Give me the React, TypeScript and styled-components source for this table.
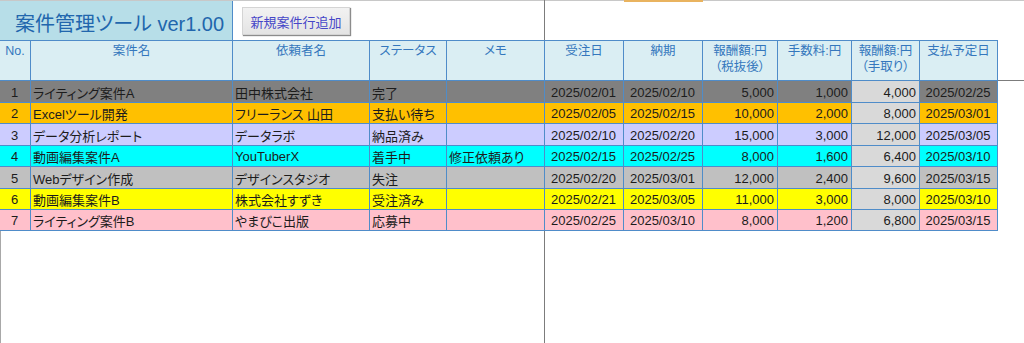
import styled, { createGlobalStyle } from "styled-components";

const GlobalStyle = createGlobalStyle`
  html, body {
    margin: 0;
    padding: 0;
    background: #ffffff;
    overflow: hidden;
  }
  body {
    font-family: "Liberation Sans", "Noto Sans CJK JP", sans-serif;
    font-feature-settings: "palt";
  }
`;

const COLS = "31px 202px 137px 77px 98px 79px 79px 75px 74px 68px 78px";
const BORDER = "#4f8cc9";

const Sheet = styled.div`
  position: relative;
  width: 1024px;
  height: 343px;
  display: flex;
  flex-direction: column;
`;

const TopStrip = styled.div`
  height: 1px;
  background: #c8c8c8;
  display: flex;
  flex-shrink: 0;
`;

const StripMark = styled.div`
  margin-left: 624px;
  width: 79px;
  height: 2px;
  background: #e9b35f;
`;

const TitleRow = styled.div`
  height: 39px;
  display: flex;
  flex-shrink: 0;
`;

const TitleCell = styled.div`
  width: 233px;
  box-sizing: border-box;
  border-right: 1px solid ${BORDER};
  background: #b7dee8;
  color: #2166ad;
  font-size: 20px;
  display: flex;
  align-items: center;
  padding-left: 15px;
  padding-top: 3px;
  white-space: nowrap;
  position: relative;
  z-index: 1;
`;

const ButtonArea = styled.div`
  padding: 6px 0 0 9px;
`;

const AddButton = styled.button`
  width: 108px;
  height: 28px;
  font-family: inherit;
  font-feature-settings: "palt";
  font-size: 13px;
  color: #4646c8;
  background: linear-gradient(#f2f2f2, #e4e4e4);
  border: 1px solid #d4d4d4;
  border-radius: 0;
  box-shadow: 1px 1px 1px #8c8c8c;
  padding: 0;
`;

const Grid = styled.div`
  position: relative;
  z-index: 1;
  display: grid;
  grid-template-columns: ${COLS};
  width: 998px;
  border-top: 1px solid ${BORDER};
  flex-shrink: 0;
`;

const HeadCell = styled.div`
  height: 40px;
  box-sizing: border-box;
  border-right: 1px solid ${BORDER};
  border-bottom: 1px solid ${BORDER};
  background: #daeef3;
  color: #3477bd;
  font-size: 12.5px;
  line-height: 16px;
  text-align: center;
  padding-top: 2px;
  white-space: pre-line;
`;

const Cell = styled.div<{ $bg: string; $h: number; $align: string }>`
  height: ${({ $h }) => $h}px;
  box-sizing: border-box;
  border-right: 1px solid ${BORDER};
  border-bottom: 1px solid ${BORDER};
  background: ${({ $bg }) => $bg};
  color: #1c1c1c;
  font-size: 13px;
  display: flex;
  align-items: center;
  justify-content: ${({ $align }) => $align};
  padding: 1px 3px 0 2px;
  white-space: nowrap;
  overflow: hidden;
`;

const Filler = styled.div`
  flex: 1;
  border-left: 1px solid #a8a8a8;
`;

const FreezeV = styled.div`
  position: absolute;
  left: 544px;
  top: 0;
  width: 1px;
  height: 343px;
  background: #7c7c7c;
`;

const FreezeH = styled.div`
  position: absolute;
  left: 0;
  top: 80px;
  width: 1024px;
  height: 1px;
  background: #7c7c7c;
`;

const headers = [
  "No.",
  "案件名",
  "依頼者名",
  "ステータス",
  "メモ",
  "受注日",
  "納期",
  "報酬額:円\n（税抜後）",
  "手数料:円",
  "報酬額:円\n（手取り）",
  "支払予定日",
];

const rows = [
  ["1", "ライティング案件A", "田中株式会社", "完了", "", "2025/02/01", "2025/02/10", "5,000", "1,000", "4,000", "2025/02/25", "#808080"],
  ["2", "Excelツール開発", "フリーランス 山田", "支払い待ち", "", "2025/02/05", "2025/02/15", "10,000", "2,000", "8,000", "2025/03/01", "#ffc000"],
  ["3", "データ分析レポート", "データラボ", "納品済み", "", "2025/02/10", "2025/02/20", "15,000", "3,000", "12,000", "2025/03/05", "#ccccff"],
  ["4", "動画編集案件A", "YouTuberX", "着手中", "修正依頼あり", "2025/02/15", "2025/02/25", "8,000", "1,600", "6,400", "2025/03/10", "#00ffff"],
  ["5", "Webデザイン作成", "デザインスタジオ", "失注", "", "2025/02/20", "2025/03/01", "12,000", "2,400", "9,600", "2025/03/15", "#c0c0c0"],
  ["6", "動画編集案件B", "株式会社すずき", "受注済み", "", "2025/02/21", "2025/03/05", "11,000", "3,000", "8,000", "2025/03/10", "#ffff00"],
  ["7", "ライティング案件B", "やまびこ出版", "応募中", "", "2025/02/25", "2025/03/10", "8,000", "1,200", "6,800", "2025/03/15", "#ffc0cb"],
];

const heights = [22, 21, 22, 21, 22, 21, 21];

const alignFor = (col: number) => {
  if (col === 0) return "center";
  if (col >= 1 && col <= 4) return "flex-start";
  if (col === 5 || col === 6 || col === 10) return "center";
  return "flex-end";
};

const App = () => {
  return (
    <Sheet>
      <GlobalStyle />
      <FreezeV />
      <FreezeH />
      <TopStrip>
        <StripMark />
      </TopStrip>
      <TitleRow>
        <TitleCell>案件管理ツール ver1.00</TitleCell>
        <ButtonArea>
          <AddButton>新規案件行追加</AddButton>
        </ButtonArea>
      </TitleRow>
      <Grid>
        {headers.map((h) => (
          <HeadCell key={h}>{h}</HeadCell>
        ))}
        {rows.map((r, i) =>
          r.slice(0, 11).map((v, c) => (
            <Cell
              key={`${i}-${c}`}
              $bg={c === 9 ? "#d9d9d9" : r[11]}
              $h={heights[i]}
              $align={alignFor(c)}
            >
              {v}
            </Cell>
          ))
        )}
      </Grid>
      <Filler />
    </Sheet>
  );
};

export default App;
